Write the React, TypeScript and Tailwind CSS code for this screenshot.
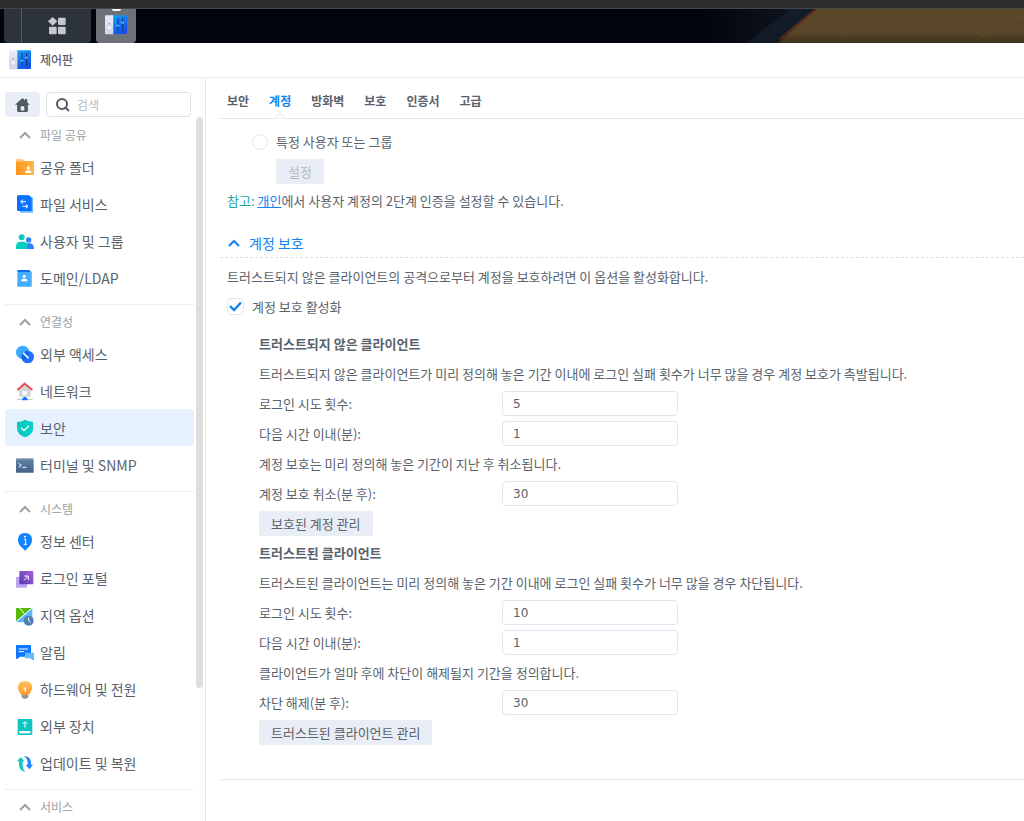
import { ReactNode } from "react";
import clsx from "clsx";

type NavItem = { label: string; icon: ReactNode; active?: boolean };
type NavGroup = { title: string; items: NavItem[] };
type Field = { id: string; label: string; value: string };

function Icon({ children }: { children: ReactNode }) {
    return (
        <svg viewBox="0 0 54 54" className="h-[18px] w-[18px] shrink-0 overflow-visible" fill="none" aria-hidden="true">
            {children}
        </svg>
    );
}

function ControlPanelIcon() {
    return (
        <svg viewBox="0 0 66 60" className="h-5 w-[22px] shrink-0" fill="none" aria-hidden="true">
            <defs>
                <linearGradient id="cp-blue" x1="0" y1="0" x2="0.5" y2="1">
                    <stop stopColor="#10a4f2" />
                    <stop offset="1" stopColor="#1450e8" />
                </linearGradient>
                <linearGradient id="cp-white" x1="0" y1="0" x2="0" y2="1">
                    <stop stopColor="#e9ebf9" />
                    <stop offset="1" stopColor="#d3d6ea" />
                </linearGradient>
            </defs>
            <path d="M3 1h23v57H3a3 3 0 0 1-3-3V4a3 3 0 0 1 3-3z" fill="url(#cp-white)" />
            <circle cx="13" cy="38" r="8" fill="#eef0fa" stroke="#b9bdd4" strokeWidth="2" />
            <circle cx="13" cy="26" r="2" fill="#7a819e" />
            <path d="M25 1h38a3 3 0 0 1 3 3v50a3 3 0 0 1-3 3H25z" fill="url(#cp-blue)" />
            <path d="M39 9v38M53 9v38" stroke="#0b3483" strokeWidth="3" />
            <path d="M34 32h9M48 23h9" stroke="#4db4ff" strokeWidth="5" />
        </svg>
    );
}

const person = (x: number, y: number) => (
    <g fill="#fff">
        <circle cx={x} cy={y} r="5" />
        <path d={`M${x - 9} ${y + 15}v-3q0-5 6-5h6q6 0 6 5v3z`} />
    </g>
);

const groups: NavGroup[] = [
    {
        title: "파일 공유",
        items: [
            {
                label: "공유 폴더",
                icon: (
                    <Icon>
                        <path d="M0 4h20l5 5h26v8H0z" fill="#ffbf73" />
                        <path d="M0 12h20l4-3h27q3 0 3 3v36q0 3-3 3H0z" fill="url(#folder)" />
                        <defs>
                            <linearGradient id="folder">
                                <stop stopColor="#ff951f" />
                                <stop offset="1" stopColor="#ffb444" />
                            </linearGradient>
                        </defs>
                        {person(37, 30)}
                    </Icon>
                ),
            },
            {
                label: "파일 서비스",
                icon: (
                    <Icon>
                        <path d="M12 1h28l11 7v45H12z" fill="#6db6ff" />
                        <path d="M6 1h31l10 9v38H6q-3 0-3-3V4q0-3 3-3z" fill="#0a70ff" />
                        <path d="M21 14l-7 6 7 6M15 20h15M29 28l7 6-7 6M35 34H20" stroke="#fff" strokeWidth="3" />
                    </Icon>
                ),
            },
            {
                label: "사용자 및 그룹",
                icon: (
                    <Icon>
                        <circle cx="38" cy="24" r="8" fill="#2a80ff" />
                        <path d="M22 51V42q2-8 12-8h6q14 0 14 17z" fill="#2a80ff" />
                        <circle cx="17" cy="16" r="9" fill="#0dc9bd" />
                        <path d="M0 51V44q0-15 14-15h8q13 0 13 15v7z" fill="#05cdbd" />
                    </Icon>
                ),
            },
            {
                label: "도메인/LDAP",
                icon: (
                    <Icon>
                        <path d="M4 6q0-3 3-3h34l3 6H4z" fill="#0870f5" />
                        <path d="M4 9h44v41q0 3-3 3H7q-3 0-3-3z" fill="#42adff" />
                        <path d="M44 4l4 5v41l-4 3z" fill="#67c3ff" />
                        {person(25, 22)}
                    </Icon>
                ),
            },
        ],
    },
    {
        title: "연결성",
        items: [
            {
                label: "외부 액세스",
                icon: (
                    <Icon>
                        <circle cx="20" cy="22" r="20" fill="#3da8ff" />
                        <circle cx="35" cy="36" r="19" fill="#1f74ff" />
                        <path d="M17 30q8-3 15-13 7 3 8 9-6 12-18 22-6-8-5-18z" fill="#0b56e4" opacity=".6" />
                        <path d="M23 25l13 13" stroke="#fff" strokeWidth="5" strokeLinecap="round" />
                    </Icon>
                ),
            },
            {
                label: "네트워크",
                icon: (
                    <Icon>
                        <path d="M9 21L26 8l18 13v23H9z" fill="#d4d6da" />
                        <path d="M20 27h12v12H20z" fill="#fff" />
                        <path d="M4 24L26 5l23 19" stroke="#e25450" strokeWidth="6" />
                        <path d="M3 52h47" stroke="#b9c2cc" strokeWidth="3" />
                        <path d="M24 45h5l6 6v4H18v-4z" fill="#1675ff" />
                    </Icon>
                ),
            },
            {
                label: "보안",
                active: true,
                icon: (
                    <Icon>
                        <path d="M27 2q11 7 24 7v19q0 18-24 27Q3 46 3 28V9q13 0 24-7z" fill="#0cc9bf" />
                        <path d="M27 2q11 7 24 7v19q0 18-24 27z" fill="#04d0c9" />
                        <path d="M16 27l8 8 15-15" stroke="#fff" strokeWidth="4" />
                    </Icon>
                ),
            },
            {
                label: "터미널 및 SNMP",
                icon: (
                    <Icon>
                        <defs>
                            <linearGradient id="term" x1="0" y1="0" x2="0" y2="1">
                                <stop stopColor="#7e9cb9" />
                                <stop offset=".2" stopColor="#597c9f" />
                                <stop offset="1" stopColor="#426487" />
                            </linearGradient>
                        </defs>
                        <rect y="7" width="53" height="43" rx="2" fill="url(#term)" />
                        <path d="M8 22l8 6-8 6M19 34h12" stroke="#fff" strokeWidth="3" />
                    </Icon>
                ),
            },
        ],
    },
    {
        title: "시스템",
        items: [
            {
                label: "정보 센터",
                icon: (
                    <Icon>
                        <path d="M27 3q21 0 21 21 0 14-13 24l-8 8-8-8Q6 38 6 24 6 3 27 3z" fill="#1283ff" />
                        <path d="M24 22h5v15M23 37h10" stroke="#fff" strokeWidth="3" />
                        <circle cx="27" cy="14" r="3" fill="#fff" />
                    </Icon>
                ),
            },
            {
                label: "로그인 포털",
                icon: (
                    <Icon>
                        <defs>
                            <linearGradient id="portal" x1="1" y1="0" x2="0" y2="1">
                                <stop stopColor="#a563db" />
                                <stop offset="1" stopColor="#5a35ad" />
                            </linearGradient>
                        </defs>
                        <rect y="24" width="33" height="32" rx="2" fill="#c0a2f2" />
                        <rect x="10" y="6" width="42" height="40" rx="2" fill="url(#portal)" />
                        <path d="M24 34l12-12M25 21h12v12" stroke="#fff" strokeWidth="3" />
                    </Icon>
                ),
            },
            {
                label: "지역 옵션",
                icon: (
                    <Icon>
                        <rect y="6" width="49" height="43" rx="2" fill="#5bb9ff" />
                        <path d="M2 6h45L0 45V8z" fill="#59b80a" />
                        <path d="M0 47L49 6M11 6l15 18" stroke="#fff" strokeWidth="3" />
                        <circle cx="38" cy="44" r="15" fill="#4f80b1" />
                        <path d="M38 35v9l5 5" stroke="#fff" strokeWidth="3" />
                    </Icon>
                ),
            },
            {
                label: "알림",
                icon: (
                    <Icon>
                        <path d="M2 6h41q2 0 2 2v33H12l-7 6H0V8q0-2 2-2z" fill="#0b76ff" />
                        <path d="M8 18h28M8 26h16" stroke="#fff" strokeWidth="3" />
                        <path d="M27 29h27v22h-5l-6-5H27z" fill="#61b9ff" />
                    </Icon>
                ),
            },
            {
                label: "하드웨어 및 전원",
                icon: (
                    <Icon>
                        <defs>
                            <linearGradient id="bulb" x1="0" y1="0" x2="0" y2="1">
                                <stop stopColor="#ffc163" />
                                <stop offset="1" stopColor="#ff9825" />
                            </linearGradient>
                        </defs>
                        <path d="M17 45h20v6l-6 5h-8l-6-5z" fill="#8d969e" />
                        <path d="M27 3q21 0 21 20 0 10-11 22H17Q6 33 6 23 6 3 27 3z" fill="url(#bulb)" />
                        <path d="M23 26l5-2v13" stroke="#fff" strokeWidth="4" />
                    </Icon>
                ),
            },
            {
                label: "외부 장치",
                icon: (
                    <Icon>
                        <rect x="5" y="6" width="44" height="48" rx="2" fill="#0fc3c0" />
                        <path d="M10 42h34v7H10z" fill="#fff" />
                        <path d="M40 45h2" stroke="#0fc3c0" strokeWidth="3" />
                        <path d="M27 32V15M20 21l7-7 7 7" stroke="#fff" strokeWidth="3" />
                    </Icon>
                ),
            },
            {
                label: "업데이트 및 복원",
                icon: (
                    <Icon>
                        <path d="M14 9L3 22h6v12q2 18 19 19-8-7-8-19V22h6z" fill="#14c6c4" />
                        <path d="M40 46l11-14h-6V24Q43 6 23 6q11 6 12 18v8h-6z" fill="#2482ff" />
                    </Icon>
                ),
            },
        ],
    },
    { title: "서비스", items: [] },
];

const tabs = ["보안", "계정", "방화벽", "보호", "인증서", "고급"];

function Chevron() {
    return (
        <svg viewBox="0 0 12 8" className="h-2 w-3 shrink-0" fill="none" stroke="currentColor" strokeWidth="2" aria-hidden="true">
            <path d="M1 7l5-5 5 5" />
        </svg>
    );
}

function Taskbar() {
    return (
        <header className="flex h-[43px] shrink-0 border-t-8 border-[#2d2d2d] bg-[#02040b]">
            <div className="flex w-full border-t border-[#45464a]">
                <div className="ml-1 flex w-[87px] rounded-b-sm bg-[#2c333d]">
                    <div className="w-[18px] border-r border-[#555c65]" />
                    <button aria-label="메인 메뉴" className="flex flex-1 items-center justify-center">
                        <svg viewBox="0 0 54 54" className="h-[18px] w-[18px]" fill="#c5c9ce" aria-hidden="true">
                            <path d="M14 0l14 13-14 13L0 13z" />
                            <rect x="30" y="2" width="23" height="22" rx="3" />
                            <rect x="3" y="29" width="23" height="23" rx="3" />
                            <rect x="30" y="29" width="23" height="23" rx="3" />
                        </svg>
                    </button>
                </div>
                <button aria-label="제어판" className="ml-[5px] flex w-10 flex-col items-center gap-1 rounded-b-sm bg-[#6c7278]">
                    <span className="h-[2px] w-[9px] rounded-b-sm bg-white" />
                    <ControlPanelIcon />
                </button>
                <svg viewBox="0 0 324 34" preserveAspectRatio="none" className="ml-auto h-[34px] w-[324px]" aria-hidden="true">
                    <defs>
                        <linearGradient id="sand" x1="0" y1="0" x2="0" y2="1">
                            <stop stopColor="#5c4828" />
                            <stop offset=".7" stopColor="#58462a" />
                            <stop offset="1" stopColor="#3d2f19" />
                        </linearGradient>
                        <linearGradient id="night">
                            <stop stopColor="#02040b" />
                            <stop offset="1" stopColor="#111824" />
                        </linearGradient>
                    </defs>
                    <path d="M0 0h116L78 34H0z" fill="url(#night)" />
                    <path d="M90 0h26L78 34H46z" fill="#17202b" opacity=".7" />
                    <path d="M116 0h208v34H78z" fill="url(#sand)" />
                    <path d="M116 0L80 30" stroke="#60291a" strokeWidth="2" />
                    <path d="M144 28l14-18M278 30q20-16 46-22" stroke="#6a5531" strokeWidth="2" fill="none" opacity=".3" />
                </svg>
            </div>
        </header>
    );
}

function Sidebar() {
    return (
        <aside className="flex w-[206px] shrink-0 flex-col border-r border-[#e3e8ee] pt-[14px]">
            <div className="flex gap-[6px] pr-[14px] pl-[5px]">
                <button aria-label="홈" className="flex h-[25px] w-[35px] items-center justify-center rounded-sm bg-[#e9edf5]">
                    <svg viewBox="0 0 42 39" className="h-[14px] w-[15px]" aria-hidden="true">
                        <path d="M21 0L0 19h6v17q0 3 3 3h24q3 0 3-3V19h6l-8-7V3h-6v4z" fill="#505a64" />
                        <path d="M16 23h10v12H16z" fill="#e9edf5" />
                    </svg>
                </button>
                <label className="flex h-[25px] min-w-0 flex-1 items-center gap-[7px] rounded-sm border border-[#d9e1e9] pl-[9px]">
                    <svg viewBox="0 0 14 14" className="h-[14px] w-[14px] shrink-0" fill="none" stroke="#505a64" strokeWidth="2" aria-hidden="true">
                        <circle cx="6" cy="6" r="5" />
                        <path d="M9 9l4 4" />
                    </svg>
                    <input aria-label="검색" placeholder="검색" className="w-full min-w-0 text-xs outline-none placeholder:text-[#b6bbc0]" />
                </label>
            </div>
            <div className="flex min-h-0 flex-1">
                <nav className="min-w-0 flex-1 overflow-hidden pt-px pl-[5px]">
                    {groups.map((group, i) => (
                        <div key={group.title} className={clsx("mr-[2px]", i > 0 && "mt-2 border-t border-[#e9eef5]")}>
                            <button className="flex h-[30px] w-full items-center gap-[9px] pt-1 pl-[14px] text-xs text-[#9a9fa5]">
                                <Chevron />
                                {group.title}
                            </button>
                            <ul>
                                {group.items.map((item) => (
                                    <li key={item.label}>
                                        <a
                                            href="#"
                                            className={clsx(
                                                "flex h-[37px] items-center gap-[6px] rounded-sm pl-[11px] text-sm",
                                                item.active && "bg-[#e5f1fe]"
                                            )}
                                        >
                                            {item.icon}
                                            {item.label}
                                        </a>
                                    </li>
                                ))}
                            </ul>
                        </div>
                    ))}
                </nav>
                <div className="mr-[2px] h-[571px] w-[7px] rounded-full bg-[#dedede]" />
            </div>
        </aside>
    );
}

function FieldRow({ id, label, value }: Field) {
    return (
        <div className="flex h-[25px] items-center">
            <label htmlFor={id} className="w-[243px] shrink-0">
                {label}
            </label>
            <input
                id={id}
                defaultValue={value}
                className="h-[25px] w-44 rounded-sm border border-[#dfe6ed] px-[10px] font-['DejaVu_Sans','Noto_Sans_CJK_KR',sans-serif] text-xs outline-none"
            />
        </div>
    );
}

function ClientSettings({ title, description, fields, note, release, button }: { title: string; description: string; fields: Field[]; note: string; release: Field; button: string }) {
    return (
        <section className="flex flex-col items-start gap-[5px]">
            <h3 className="text-[13px] leading-[25px] font-bold">{title}</h3>
            <p>{description}</p>
            {fields.map((field) => (
                <FieldRow key={field.id} {...field} />
            ))}
            <p>{note}</p>
            <FieldRow {...release} />
            <button className="h-[25px] rounded-xs bg-[#e9edf5] px-3">{button}</button>
        </section>
    );
}

export default function App() {
    return (
        <div className="flex h-screen flex-col overflow-hidden bg-white font-['Noto_Sans_CJK_KR','DejaVu_Sans',sans-serif] text-[#59626c]">
            <Taskbar />
            <div className="flex h-[35px] shrink-0 items-center gap-[9px] border-b border-[#e6ecf2] pl-[9px]">
                <ControlPanelIcon />
                <h1 className="text-xs font-medium">제어판</h1>
            </div>
            <div className="flex min-h-0 flex-1">
                <Sidebar />
                <main className="min-w-0 flex-1 overflow-hidden pl-[14px]">
                    <div role="tablist" className="flex h-[41px] gap-5 border-b border-[#dfe6ed] pt-[6px] pl-[7px] text-xs font-bold">
                        {tabs.map((tab) => (
                            <button key={tab} role="tab" aria-selected={tab === "계정"} className={clsx("relative", tab === "계정" && "text-[#0d84f2]")}>
                                {tab}
                                {tab === "계정" && (
                                    <svg viewBox="0 0 12 7" className="absolute -bottom-px left-1/2 h-[7px] w-3 -translate-x-1/2" fill="#fff" aria-hidden="true">
                                        <path d="M0 6.500h1L6 1l5 5.500h1" stroke="#dfe6ed" />
                                    </svg>
                                )}
                            </button>
                        ))}
                    </div>
                    <div className="pt-[10px] pl-[7px] text-[13px] leading-[25px]">
                        <div className="flex flex-col items-start gap-[5px] pl-[25px]">
                            <label className="flex items-center gap-2">
                                <input type="radio" name="target" className="h-4 w-4 appearance-none rounded-full border border-[#dfe6ed]" />
                                특정 사용자 또는 그룹
                            </label>
                            <button disabled className="ml-6 h-[25px] rounded-xs bg-[#e9edf5] px-3 text-[#b4b9c0]">
                                설정
                            </button>
                        </div>
                        <p className="mt-1">
                            <span className="text-[#17aaa2]">참고:</span>{" "}
                            <a href="#" className="text-[#0d84f2] underline">
                                개인
                            </a>
                            에서 사용자 계정의 2단계 인증을 설정할 수 있습니다.
                        </p>
                    </div>
                    <h2 className="mt-[15px] border-b border-dashed border-[#dde1e6] text-[#0d84f2]">
                        <button className="flex h-[29px] items-center gap-[9px] pl-2 text-sm">
                            <Chevron />
                            계정 보호
                        </button>
                    </h2>
                    <div className="pt-[6px] pl-[7px] text-[13px] leading-[25px]">
                        <p>트러스트되지 않은 클라이언트의 공격으로부터 계정을 보호하려면 이 옵션을 활성화합니다.</p>
                        <label className="mt-[5px] flex items-center gap-2">
                            <span className="relative flex">
                                <input type="checkbox" defaultChecked className="peer h-[17px] w-[17px] appearance-none rounded-sm border border-[#dfe6ed]" />
                                <svg viewBox="0 0 17 17" className="pointer-events-none absolute inset-0 hidden peer-checked:block" fill="none" aria-hidden="true">
                                    <path d="M3 8l4 4 7-7.500" stroke="#0d84f2" strokeWidth="2.300" />
                                </svg>
                            </span>
                            계정 보호 활성화
                        </label>
                        <div className="mt-3 flex flex-col gap-1 pl-8">
                            <ClientSettings
                                title="트러스트되지 않은 클라이언트"
                                description="트러스트되지 않은 클라이언트가 미리 정의해 놓은 기간 이내에 로그인 실패 횟수가 너무 많을 경우 계정 보호가 촉발됩니다."
                                fields={[
                                    { id: "untrusted-attempts", label: "로그인 시도 횟수:", value: "5" },
                                    { id: "untrusted-within", label: "다음 시간 이내(분):", value: "1" },
                                ]}
                                note="계정 보호는 미리 정의해 놓은 기간이 지난 후 취소됩니다."
                                release={{ id: "untrusted-release", label: "계정 보호 취소(분 후):", value: "30" }}
                                button="보호된 계정 관리"
                            />
                            <ClientSettings
                                title="트러스트된 클라이언트"
                                description="트러스트된 클라이언트는 미리 정의해 놓은 기간 이내에 로그인 실패 횟수가 너무 많을 경우 차단됩니다."
                                fields={[
                                    { id: "trusted-attempts", label: "로그인 시도 횟수:", value: "10" },
                                    { id: "trusted-within", label: "다음 시간 이내(분):", value: "1" },
                                ]}
                                note="클라이언트가 얼마 후에 차단이 해제될지 기간을 정의합니다."
                                release={{ id: "trusted-release", label: "차단 해제(분 후):", value: "30" }}
                                button="트러스트된 클라이언트 관리"
                            />
                        </div>
                    </div>
                    <hr className="mt-[34px] border-[#e6ebf2]" />
                </main>
            </div>
        </div>
    );
}
